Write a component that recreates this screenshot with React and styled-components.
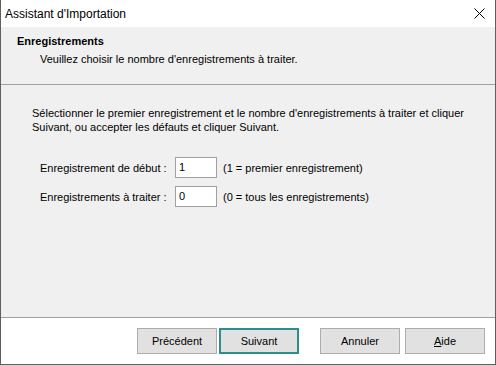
import React from 'react';
import styled, { createGlobalStyle } from 'styled-components';

const GlobalStyle = createGlobalStyle`
    html, body {
        margin: 0;
        padding: 0;
        background: #ffffff;
    }
    body {
        font-family: "Liberation Sans", Arial, sans-serif;
        font-size: 11px;
        color: #000000;
    }
`;

const Window = styled.div`
    width: 496px;
    height: 365px;
    box-sizing: border-box;
    display: flex;
    flex-direction: column;
    border: 1px solid #5f5f5f;
    border-top: none;
    background-color: #f0f0f0;
`;

const TitleBar = styled.div`
    height: 27px;
    flex-shrink: 0;
    display: flex;
    align-items: center;
    justify-content: space-between;
    padding-left: 4px;
    padding-right: 10px;
    background-color: #ffffff;
`;

const Title = styled.div`
    font-size: 12px;
    line-height: 16px;
`;

const CloseIcon = styled.svg`
    width: 11px;
    height: 11px;
    display: block;
`;

const Header = styled.div`
    height: 58px;
    flex-shrink: 0;
    box-sizing: border-box;
    padding: 7px 0 0 16px;
    border-bottom: 1px solid #a0a0a0;
    display: flex;
    flex-direction: column;
    gap: 4px;
`;

const HeaderTitle = styled.div`
    font-weight: 700;
    line-height: 14px;
`;

const HeaderText = styled.div`
    line-height: 14px;
    padding-left: 23px;
`;

const Body = styled.div`
    flex: 1;
    padding: 21px 0 0 31px;
    display: flex;
    flex-direction: column;
    border-bottom: 1px solid #a0a0a0;
`;

const Intro = styled.p`
    margin: 0 0 23px 0;
    line-height: 14px;
    white-space: nowrap;
`;

const Fields = styled.div`
    display: grid;
    grid-template-columns: 135px 48px auto;
    row-gap: 8px;
    padding-left: 8px;
    align-items: center;
    white-space: nowrap;
`;

const Label = styled.div`
    line-height: 14px;
`;

const Field = styled.div`
    width: 42px;
    height: 21px;
    box-sizing: border-box;
    border: 1px solid #a0a0a0;
    background-color: #ffffff;
    padding-left: 3px;
    line-height: 19px;
`;

const Hint = styled.div`
    line-height: 14px;
`;

const Footer = styled.div`
    height: 46px;
    flex-shrink: 0;
    background-color: #ffffff;
    display: flex;
    align-items: flex-start;
    justify-content: flex-end;
    padding: 10px 10px 0 0;
    box-sizing: border-box;
`;

const Button = styled.div`
    width: 80px;
    height: 26px;
    box-sizing: border-box;
    display: flex;
    align-items: center;
    justify-content: center;
    background-color: #e1e1e1;
    border: ${p => (p.focused ? '2px solid #2a8e8e' : '1px solid #adadad')};
    margin-left: ${p => p.gap || 0}px;
`;

const Mnemonic = styled.span`
    text-decoration: underline;
`;

export default function App() {
    return (
        <>
            <GlobalStyle />
            <Window>
                <TitleBar>
                    <Title>Assistant d'Importation</Title>
                    <CloseIcon viewBox="0 0 11 11">
                        <path d="M0.5 0.5 L10.5 10.5 M10.5 0.5 L0.5 10.5" stroke="#000" strokeWidth="1" fill="none" />
                    </CloseIcon>
                </TitleBar>
                <Header>
                    <HeaderTitle>Enregistrements</HeaderTitle>
                    <HeaderText>Veuillez choisir le nombre d'enregistrements à traiter.</HeaderText>
                </Header>
                <Body>
                    <Intro>
                        Sélectionner le premier enregistrement et le nombre d'enregistrements à traiter et cliquer
                        <br />
                        Suivant, ou accepter les défauts et cliquer Suivant.
                    </Intro>
                    <Fields>
                        <Label>Enregistrement de début :</Label>
                        <Field>1</Field>
                        <Hint>(1 = premier enregistrement)</Hint>
                        <Label>Enregistrements à traiter :</Label>
                        <Field>0</Field>
                        <Hint>(0 = tous les enregistrements)</Hint>
                    </Fields>
                </Body>
                <Footer>
                    <Button>Précédent</Button>
                    <Button focused gap={2}>Suivant</Button>
                    <Button gap={21}>Annuler</Button>
                    <Button gap={5}><span><Mnemonic>A</Mnemonic>ide</span></Button>
                </Footer>
            </Window>
        </>
    );
}
